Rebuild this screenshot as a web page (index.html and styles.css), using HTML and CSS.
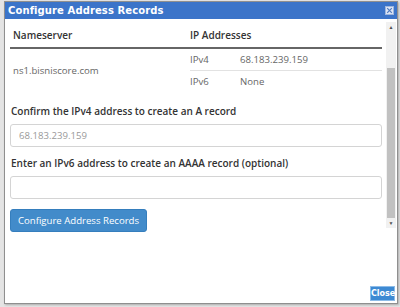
FILE: index.html
```html
<!DOCTYPE html>
<html>
<head>
    <title>Configure Address Records</title>
    <link rel="stylesheet" href="styles.css">
</head>
<body>
    <div class="page-lines">
        <div class="dialog">
            <div class="titlebar">
                <span class="title">Configure Address Records</span>
                <span class="title-close">
                    <svg width="9" height="9" viewBox="0 0 9 9">
                        <rect x="0.5" y="0.5" width="8" height="8" fill="#dce6f5" stroke="#9fb6dd"/>
                        <path d="M2.2 2.2 L6.8 6.8 M6.8 2.2 L2.2 6.8" stroke="#4f79bf" stroke-width="1.2"/>
                    </svg>
                </span>
            </div>

            <div class="dialog-body">
                <div class="scroll-area">
                    <div class="content">
                        <div class="ns-table">
                            <div class="ns-head">
                                <div class="col-ns">Nameserver</div>
                                <div class="col-ip">IP Addresses</div>
                            </div>
                            <div class="ns-row">
                                <div class="col-ns ns-name">ns1.bisniscore.com</div>
                                <div class="col-ip ip-list">
                                    <div class="ip-row">
                                        <span class="ip-type">IPv4</span>
                                        <span>68.183.239.159</span>
                                    </div>
                                    <div class="ip-row">
                                        <span class="ip-type">IPv6</span>
                                        <span>None</span>
                                    </div>
                                </div>
                            </div>
                        </div>

                        <div class="form-group">
                            <label for="ipv4">Confirm the IPv4 address to create an A record</label>
                            <input type="text" id="ipv4" placeholder="68.183.239.159">
                        </div>

                        <div class="form-group">
                            <label for="ipv6">Enter an IPv6 address to create an AAAA record (optional)</label>
                            <input type="text" id="ipv6">
                        </div>

                        <button class="btn-primary">Configure Address Records</button>
                    </div>

                    <div class="scrollbar">
                        <div class="sb-arrow">&#9650;</div>
                        <div class="sb-track"><div class="sb-thumb"></div></div>
                        <div class="sb-arrow">&#9660;</div>
                    </div>
                </div>

                <div class="button-pane">
                    <button class="btn-close">Close</button>
                </div>
            </div>
        </div>
    </div>
</body>
</html>
```

FILE: styles.css
```css
body {
    margin: 0;
    font-family: "Open Sans", Arial, sans-serif;
    background-color: #e4e4e4;
}
.page-lines {
    height: 307px;
    padding: 1px 2px 3px 4px;
    box-sizing: border-box;
}
.dialog {
    height: 303px;
    background-color: white;
    border: 1px solid #8f8f8f;
    box-shadow: 1px 1px 2px rgba(0,0,0,0.25);
    display: flex;
    flex-direction: column;
    box-sizing: border-box;
}
.titlebar {
    height: 17px;
    background-color: #3b74c9;
    color: white;
    display: flex;
    align-items: center;
    justify-content: space-between;
    padding: 0 3px 0 3px;
}
.title {
    font-family: "DejaVu Sans", Verdana, sans-serif;
    font-weight: bold;
    font-size: 10px;
    letter-spacing: 0.1px;
}
.title-close {
    display: flex;
}
.dialog-body {
    flex: 1;
    display: flex;
    flex-direction: column;
}
.scroll-area {
    display: flex;
    height: 206px;
    margin-top: 3px;
}
.content {
    flex: 1;
    padding: 0 4px 0 5px;
}
.ns-table {
    font-size: 9.6px;
}
.ns-head {
    display: flex;
    font-size: 10px;
    font-weight: 600;
    color: #333;
    height: 24px;
    align-items: center;
    padding-top: 1px;
    border-bottom: 2px solid #666;
}
.col-ns {
    width: 180px;
    padding-left: 3px;
    box-sizing: border-box;
}
.col-ip {
    flex: 1;
}
.ns-row {
    display: flex;
    color: #666;
}
.ns-name {
    display: flex;
    align-items: center;
}
.ip-row {
    display: flex;
    height: 21px;
    align-items: center;
}
.ip-row + .ip-row {
    border-top: 1px solid #e2e2e2;
}
.ip-type {
    width: 50px;
}
.form-group {
    margin-top: 12px;
}
.form-group + .form-group {
    margin-top: 9px;
}
label {
    display: block;
    font-size: 10px;
    font-weight: 600;
    color: #333;
    margin: 0 0 4px 1px;
}
input[type="text"] {
    width: 100%;
    height: 23px;
    padding: 0 8px;
    border: 1px solid #d4d4d4;
    border-radius: 3px;
    box-sizing: border-box;
    font-family: "Open Sans", Arial, sans-serif;
    font-size: 9.6px;
    color: #555;
}
input::placeholder {
    color: #999;
}
.btn-primary {
    margin-top: 10px;
    height: 23px;
    width: 137px;
    padding: 0;
    background-color: #428bca;
    color: white;
    border: 1px solid #357ebd;
    border-radius: 3px;
    font-family: "Open Sans", Arial, sans-serif;
    font-size: 9.6px;
}
.scrollbar {
    width: 10px;
    margin-right: 1px;
    background-color: #f1f1f1;
    display: flex;
    flex-direction: column;
}
.sb-arrow {
    height: 10px;
    font-size: 5px;
    color: #505050;
    text-align: center;
    line-height: 10px;
}
.sb-track {
    flex: 1;
    display: flex;
    flex-direction: column;
    justify-content: flex-end;
}
.sb-thumb {
    height: 150px;
    margin: 0 1px;
    background-color: #c1c1c1;
}
.button-pane {
    flex: 1;
    display: flex;
    justify-content: flex-end;
    align-items: flex-end;
    padding: 0 2px 2px 0;
}
.btn-close {
    width: 25px;
    height: 15px;
    padding: 0;
    background-color: #3d8ad3;
    color: white;
    border: 1px solid #8cbbe8;
    font-family: "DejaVu Sans", Verdana, sans-serif;
    font-weight: bold;
    font-size: 8px;
}
```
